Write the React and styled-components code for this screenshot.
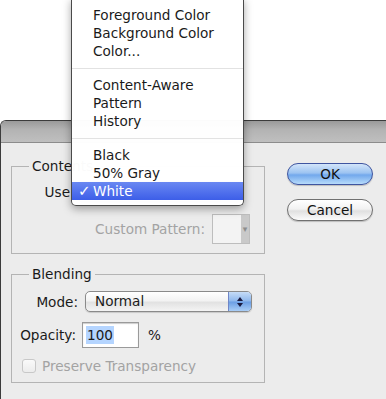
import React from "react";
import styled, { createGlobalStyle, css } from "styled-components";

const GlobalStyle = createGlobalStyle`
  html, body {
    margin: 0;
    padding: 0;
    background: #ffffff;
  }
  body {
    font-family: "DejaVu Sans", "Liberation Sans", sans-serif;
    font-size: 13.6px;
    color: #1a1a1a;
  }
`;

const menuGroups = [
  ["Foreground Color", "Background Color", "Color..."],
  ["Content-Aware", "Pattern", "History"],
  ["Black", "50% Gray", "White"],
];

function Stepper() {
  return (
    <svg width="8" height="12" viewBox="0 0 8 12">
      <path d="M4 1 L7 5 L1 5 Z" fill="#1a1a40" />
      <path d="M4 11 L7 7 L1 7 Z" fill="#1a1a40" />
    </svg>
  );
}

function PopupMenu({ selected }) {
  return (
    <Menu>
      {menuGroups.map((group, gi) => (
        <React.Fragment key={gi}>
          {gi > 0 && <Separator />}
          {group.map((item) => (
            <MenuItem key={item} active={item === selected}>
              {item === selected && <Check>✓</Check>}
              {item}
            </MenuItem>
          ))}
        </React.Fragment>
      ))}
    </Menu>
  );
}

export default function App() {
  return (
    <Page>
      <GlobalStyle />
      <Dialog>
        <TitleBar />
        <Body>
          <Groups>
            <Group>
              <Legend>Contents</Legend>
              <Row top={7}>
                <Label width={58}>Use</Label>
                <Select>
                  <SelectText />
                  <SelectArrow>
                    <Stepper />
                  </SelectArrow>
                </Select>
              </Row>
              <Row top={12}>
                <Label width={193} disabled>
                  Custom Pattern:
                </Label>
                <Swatch>
                  <SwatchArrow>▾</SwatchArrow>
                </Swatch>
              </Row>
              <Spacer h={9} />
            </Group>

            <Group top={12}>
              <Legend>Blending</Legend>
              <Row top={9}>
                <Label width={66}>Mode:</Label>
                <Select>
                  <SelectText>Normal</SelectText>
                  <SelectArrow>
                    <Stepper />
                  </SelectArrow>
                </Select>
              </Row>
              <Row top={10} gap={6}>
                <Label width={64}>Opacity:</Label>
                <NumberField>
                  <Selected>100</Selected>
                </NumberField>
                <Unit>%</Unit>
              </Row>
              <Row top={10} gap={6} indent={10}>
                <Checkbox />
                <Label disabled>Preserve Transparency</Label>
              </Row>
              <Spacer h={8} />
            </Group>
          </Groups>

          <Buttons>
            <Button primary>OK</Button>
            <Button>Cancel</Button>
          </Buttons>
        </Body>
      </Dialog>
      <PopupMenu selected="White" />
    </Page>
  );
}

const Page = styled.div`
  position: relative;
  width: 386px;
  height: 399px;
  overflow: hidden;
  background: #ffffff;
`;

const Dialog = styled.div`
  margin-top: 120px;
  height: 279px;
  background: #ececec;
  border-left: 1px solid #3c3c3c;
  border-top: 1px solid #3c3c3c;
  border-top-left-radius: 6px;
  overflow: hidden;
  display: flex;
  flex-direction: column;
`;

const TitleBar = styled.div`
  height: 21px;
  flex: none;
  background: linear-gradient(#9a9a9a, #b3b3b3 40%, #bfbfbf);
  border-bottom: 1px solid #8c8c8c;
`;

const Body = styled.div`
  display: flex;
  align-items: flex-start;
  padding: 15px 0 0 10px;
`;

const Groups = styled.div`
  display: flex;
  flex-direction: column;
  width: 254px;
`;

const Group = styled.fieldset`
  margin: ${(p) => p.top || 0}px 0 0 0;
  padding: 0;
  border: 1px solid #b4b4b4;
  min-width: 0;
`;

const Legend = styled.legend`
  margin-left: 17px;
  padding: 0 3px;
  line-height: 16px;
  height: 16px;
  color: #1a1a1a;
`;

const Row = styled.div`
  display: flex;
  align-items: center;
  gap: ${(p) => (p.gap !== undefined ? p.gap : 7)}px;
  margin-top: ${(p) => p.top || 0}px;
  padding-left: ${(p) => p.indent || 0}px;
`;

const Spacer = styled.div`
  height: ${(p) => p.h}px;
`;

const Label = styled.span`
  display: inline-block;
  ${(p) =>
    p.width &&
    css`
      width: ${p.width}px;
      text-align: right;
      flex: none;
    `}
  color: ${(p) => (p.disabled ? "#a3a3a3" : "#1a1a1a")};
  white-space: nowrap;
`;

const Select = styled.div`
  width: 167px;
  height: 21px;
  box-sizing: border-box;
  display: flex;
  align-items: stretch;
  border: 1px solid #8a8a8a;
  border-radius: 5px;
  background: linear-gradient(#ffffff, #f3f3f3 45%, #e2e2e2 55%, #f4f4f4);
  box-shadow: 0 1px 1px rgba(0, 0, 0, 0.15);
  overflow: hidden;
`;

const SelectText = styled.span`
  flex: 1;
  padding-left: 9px;
  line-height: 19px;
`;

const SelectArrow = styled.span`
  width: 22px;
  display: flex;
  align-items: center;
  justify-content: center;
  border-left: 1px solid #6f86c7;
  background: linear-gradient(#c6dcf7, #8eb7ec 48%, #6a9de4 52%, #a9cdf6);
`;

const Swatch = styled.div`
  width: 38px;
  height: 30px;
  box-sizing: border-box;
  display: flex;
  justify-content: flex-end;
  border: 1px solid #bdbdbd;
  background: #f3f3f3;
`;

const SwatchArrow = styled.span`
  width: 8px;
  background: #c9c9c9;
  color: #8d8d8d;
  font-size: 9px;
  line-height: 28px;
  text-align: center;
`;

const NumberField = styled.div`
  width: 57px;
  height: 26px;
  box-sizing: border-box;
  border: 1px solid #9a9a9a;
  box-shadow: inset 0 1px 1px rgba(0, 0, 0, 0.2);
  background: #ffffff;
  padding: 3px 0 0 3px;
`;

const Selected = styled.span`
  display: inline-block;
  background: #b5d5ff;
  padding: 0 1px;
  line-height: 18px;
`;

const Unit = styled.span`
  margin-left: 3px;
`;

const Checkbox = styled.span`
  width: 14px;
  height: 14px;
  box-sizing: border-box;
  border: 1px solid #c8c8c8;
  border-radius: 3px;
  background: linear-gradient(#fafafa, #ececec);
  flex: none;
`;

const Buttons = styled.div`
  display: flex;
  flex-direction: column;
  gap: 14px;
  margin-left: 22px;
  margin-top: 5px;
`;

const Button = styled.div`
  width: 86px;
  height: 22px;
  box-sizing: border-box;
  border-radius: 11px;
  text-align: center;
  line-height: 20px;
  color: #111;
  border: 1px solid #707070;
  background: linear-gradient(#ffffff, #f2f2f2 45%, #e0e0e0 55%, #fbfbfb);
  box-shadow: 0 1px 1px rgba(0, 0, 0, 0.2);

  ${(p) =>
    p.primary &&
    css`
      border-color: #3f55a0;
      background: linear-gradient(#d3e5fa, #9cc3f1 45%, #72a8ec 55%, #b7dbfb);
    `}
`;

const Menu = styled.div`
  position: absolute;
  left: 71px;
  top: -2px;
  width: 173px;
  box-sizing: border-box;
  padding: 8px 0 5px 0;
  background: rgba(255, 255, 255, 0.98);
  border: 1px solid #4a4a4a;
  border-top: none;
  border-radius: 0 0 5px 5px;
  box-shadow: 0 3px 8px rgba(0, 0, 0, 0.35);
`;

const MenuItem = styled.div`
  position: relative;
  height: 18px;
  line-height: 18px;
  padding-left: 21px;
  color: #1a1a1a;
  white-space: nowrap;

  ${(p) =>
    p.active &&
    css`
      color: #ffffff;
      background: linear-gradient(#6a88f2, #3d5ee8);
    `}
`;

const Check = styled.span`
  position: absolute;
  left: 6px;
  font-size: 15px;
  font-weight: bold;
`;

const Separator = styled.div`
  height: 1px;
  margin: 8px 0 7px 0;
  background: #e2e2e2;
`;
